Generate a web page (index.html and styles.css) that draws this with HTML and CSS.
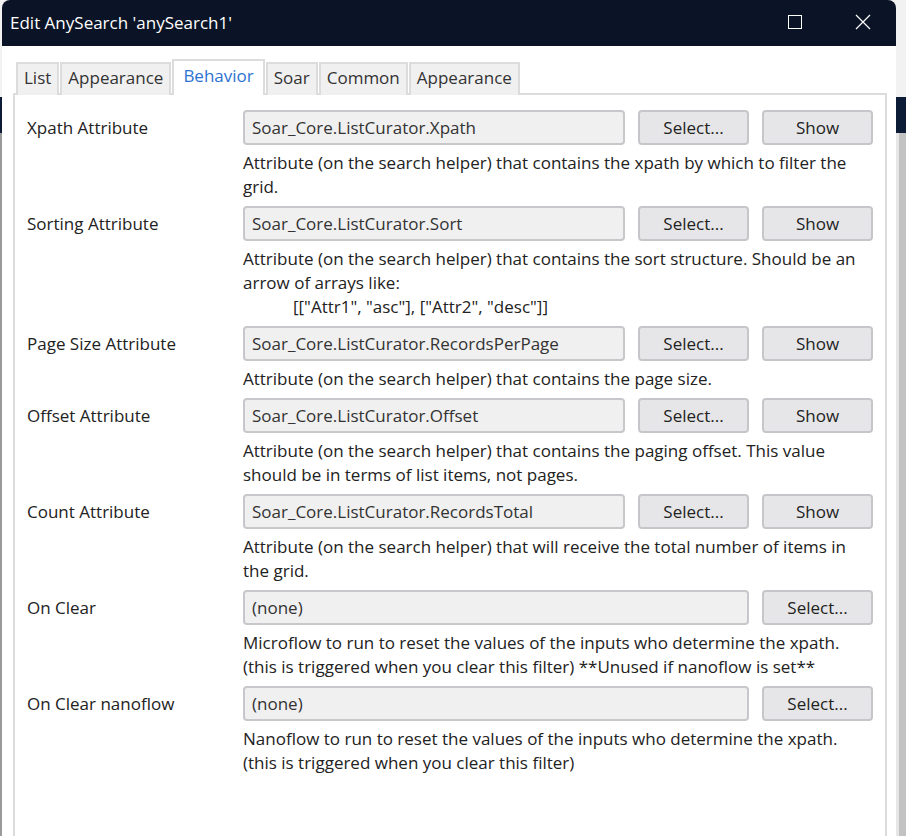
FILE: index.html
```html
<!DOCTYPE html>
<html>
<head>
<meta charset="utf-8">
<link rel="stylesheet" href="styles.css">
</head>
<body>
<div class="window">
  <div class="titlebar">
    <span class="title">Edit AnySearch 'anySearch1'</span>
    <div class="controls">
      <svg class="ctl" width="16" height="16" viewBox="0 0 16 16"><rect x="1.5" y="1.5" width="13" height="13" fill="none" stroke="#fff" stroke-width="1"/></svg>
      <svg class="ctl close" width="16" height="16" viewBox="0 0 16 16"><path d="M1 1 L15 15 M15 1 L1 15" stroke="#fff" stroke-width="1.2" fill="none"/></svg>
    </div>
  </div>
  <div class="content">
    <div class="tabs">
      <div class="tab">List</div>
      <div class="tab">Appearance</div>
      <div class="tab active">Behavior</div>
      <div class="tab">Soar</div>
      <div class="tab">Common</div>
      <div class="tab">Appearance</div>
    </div>
    <div class="panel">
      <div class="form">
        <div class="label">Xpath Attribute</div>
        <div class="field">
          <div class="controls-row">
            <div class="input">Soar_Core.ListCurator.Xpath</div>
            <div class="btn">Select...</div>
            <div class="btn">Show</div>
          </div>
          <div class="desc">Attribute (on the search helper) that contains the xpath by which to filter the<br>grid.</div>
        </div>

        <div class="label">Sorting Attribute</div>
        <div class="field">
          <div class="controls-row">
            <div class="input">Soar_Core.ListCurator.Sort</div>
            <div class="btn">Select...</div>
            <div class="btn">Show</div>
          </div>
          <div class="desc">Attribute (on the search helper) that contains the sort structure. Should be an<br>arrow of arrays like:<br><span class="indent">[["Attr1", "asc"], ["Attr2", "desc"]]</span></div>
        </div>

        <div class="label">Page Size Attribute</div>
        <div class="field">
          <div class="controls-row">
            <div class="input">Soar_Core.ListCurator.RecordsPerPage</div>
            <div class="btn">Select...</div>
            <div class="btn">Show</div>
          </div>
          <div class="desc">Attribute (on the search helper) that contains the page size.</div>
        </div>

        <div class="label">Offset Attribute</div>
        <div class="field">
          <div class="controls-row">
            <div class="input">Soar_Core.ListCurator.Offset</div>
            <div class="btn">Select...</div>
            <div class="btn">Show</div>
          </div>
          <div class="desc">Attribute (on the search helper) that contains the paging offset. This value<br>should be in terms of list items, not pages.</div>
        </div>

        <div class="label">Count Attribute</div>
        <div class="field">
          <div class="controls-row">
            <div class="input">Soar_Core.ListCurator.RecordsTotal</div>
            <div class="btn">Select...</div>
            <div class="btn">Show</div>
          </div>
          <div class="desc">Attribute (on the search helper) that will receive the total number of items in<br>the grid.</div>
        </div>

        <div class="label">On Clear</div>
        <div class="field">
          <div class="controls-row">
            <div class="input wide">(none)</div>
            <div class="btn">Select...</div>
          </div>
          <div class="desc">Microflow to run to reset the values of the inputs who determine the xpath.<br>(this is triggered when you clear this filter) **Unused if nanoflow is set**</div>
        </div>

        <div class="label">On Clear nanoflow</div>
        <div class="field">
          <div class="controls-row">
            <div class="input wide">(none)</div>
            <div class="btn">Select...</div>
          </div>
          <div class="desc">Nanoflow to run to reset the values of the inputs who determine the xpath.<br>(this is triggered when you clear this filter)</div>
        </div>
      </div>
    </div>
  </div>
</div>
</body>
</html>
```
FILE: styles.css
```css
* { box-sizing: border-box; }
html, body {
  margin: 0;
  padding: 0;
  height: 836px;
  overflow: hidden;
}
body {
  background:
    linear-gradient(to bottom, transparent 0, transparent 97px, #0d1c36 97px, #0d1c36 133px, transparent 133px),
    linear-gradient(to bottom, #f2f2f2 0, #f2f2f2 97px, transparent 97px),
    linear-gradient(to right, #9a9a9a 0, #9a9a9a 2px, transparent 2px),
    linear-gradient(to left, #c2c2c2 0, #c2c2c2 7px, #e6e6e6 7px, #e6e6e6 10px, transparent 10px);
  background-color: #d0d0d0;
  font-family: "Segoe UI", "Open Sans", "Noto Sans", sans-serif;
  font-size: 17px;
  color: #222222;
}
.window {
  margin-left: 2px;
  width: 894px;
  height: 836px;
  background: #ffffff;
  border-radius: 8px 8px 0 0;
  overflow: hidden;
  display: flex;
  flex-direction: column;
}
.titlebar {
  height: 46px;
  background: #0b1427;
  color: #ffffff;
  display: flex;
  align-items: center;
  justify-content: space-between;
  padding-left: 8px;
  padding-bottom: 2px;
  flex: none;
}
.title {
  font-size: 17px;
}
.controls {
  display: flex;
  align-items: center;
  gap: 52px;
  padding-right: 25px;
}
.ctl { display: block; }
.content {
  padding: 13px 9px 0 11px;
  flex: 1;
  display: flex;
  flex-direction: column;
}
.tabs {
  display: flex;
  align-items: flex-end;
  gap: 1px;
  padding-left: 3px;
  height: 36px;
  margin-bottom: -2px;
  position: relative;
  z-index: 1;
}
.tab {
  height: 33px;
  padding: 0 6px 5px;
  background: #f0f0f0;
  border: 2px solid #dcdcdc;
  border-bottom: none;
  display: flex;
  align-items: center;
  color: #333333;
}
.tab.active {
  height: 36px;
  background: #ffffff;
  color: #2d72d2;
  padding: 0 9px 5px;
}
.panel {
  flex: 1;
  border: 2px solid #dcdcdc;
  border-bottom: none;
  padding: 15px 12px 0 12px;
}
.form {
  display: grid;
  grid-template-columns: 216px 1fr;
  row-gap: 7px;
}
.label {
  height: 35px;
  display: flex;
  align-items: center;
  color: #222222;
}
.controls-row {
  display: grid;
  grid-template-columns: 1fr 111px 111px;
  column-gap: 13px;
  height: 35px;
}
.input {
  background: #f0f0f0;
  border: 2px solid #c8c8cc;
  border-radius: 4px;
  padding: 0 7px;
  display: flex;
  align-items: center;
  color: #333333;
  white-space: nowrap;
  overflow: hidden;
}
.input.wide { grid-column: span 2; }
.btn {
  background: #e6e6e8;
  border: 2px solid #c6c6ca;
  border-radius: 4px;
  display: flex;
  align-items: center;
  justify-content: center;
  color: #222222;
}
.desc {
  margin-top: 6px;
  line-height: 24px;
  color: #222222;
  white-space: nowrap;
}
.indent {
  padding-left: 50px;
}
```
